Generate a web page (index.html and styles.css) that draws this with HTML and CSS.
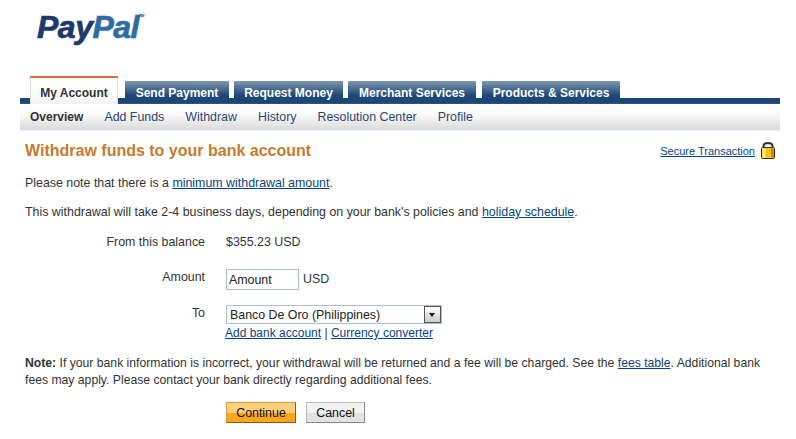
FILE: index.html
```html
<!DOCTYPE html>
<html lang="en">
<head>
    <meta charset="UTF-8">
    <title>Withdraw funds to your bank account - PayPal</title>
    <link rel="stylesheet" href="styles.css">
</head>
<body>

<div class="page">
    <!-- Logo -->
    <div class="logo"><span class="logo-pay">Pay</span><span class="logo-pal">Pal</span><span class="logo-tm">TM</span></div>

    <!-- Main tabs -->
    <div class="tabs">
        <a class="tab active">My Account</a>
        <a class="tab">Send Payment</a>
        <a class="tab">Request Money</a>
        <a class="tab">Merchant Services</a>
        <a class="tab">Products &amp; Services</a>
    </div>

    <!-- Sub navigation -->
    <div class="subnav">
        <a class="current">Overview</a>
        <a>Add Funds</a>
        <a>Withdraw</a>
        <a>History</a>
        <a>Resolution Center</a>
        <a>Profile</a>
    </div>

    <div class="content">
        <div class="title-row">
            <h1>Withdraw funds to your bank account</h1>
            <div class="secure">
                <a class="link">Secure Transaction</a>
                <svg class="lock" width="16" height="17" viewBox="0 0 16 17">
                    <path d="M3.500 7V4C3.500 2 5.200 1 8 1s4.500 1 4.500 3V7" fill="none" stroke="#333" stroke-width="2"/>
                    <path d="M5.200 6V4.200C5.200 3 6.400 2.500 8 2.500s2.800.5 2.800 1.700V6" fill="none" stroke="#c4c4c4" stroke-width=".8"/>
                    <rect x="1.500" y="5.500" width="13" height="11" rx="1" fill="#f4c21c" stroke="#3d3110"/>
                    <rect x="2.500" y="6.500" width="3" height="9" fill="#fdec94"/>
                    <rect x="11" y="6.500" width="3" height="9" fill="#c48c0c"/>
                </svg>
            </div>
        </div>

        <p class="note-line">Please note that there is a <a class="link">minimum withdrawal amount</a>.</p>
        <p class="note-line second">This withdrawal will take 2-4 business days, depending on your bank's policies and <a class="link">holiday schedule</a>.</p>

        <div class="form">
            <div class="row balance">
                <div class="label">From this balance</div>
                <div class="value">$355.23 USD</div>
            </div>
            <div class="row amount">
                <div class="label">Amount</div>
                <div class="value inline">
                    <input class="text-input" type="text" value="Amount">
                    <span>USD</span>
                </div>
            </div>
            <div class="row to">
                <div class="label">To</div>
                <div class="value">
                    <div class="select">
                        <span class="select-text">Banco De Oro (Philippines)</span>
                        <span class="select-arrow"></span>
                    </div>
                    <div class="select-links"><a class="link">Add bank account</a> | <a class="link">Currency converter</a></div>
                </div>
            </div>
        </div>

        <div class="bank-note">
            <div><b>Note:</b> If your bank information is incorrect, your withdrawal will be returned and a fee will be charged. See the <a class="link">fees table</a>. Additional bank</div>
            <div>fees may apply. Please contact your bank directly regarding additional fees.</div>
        </div>

        <div class="buttons">
            <button class="btn btn-primary" type="button">Continue</button>
            <button class="btn btn-cancel" type="button">Cancel</button>
        </div>
    </div>
</div>

</body>
</html>
```

FILE: styles.css
```css
/* Global */
body {
    margin: 0;
    background: #fff;
    color: #333;
    font-family: "Liberation Sans", Arial, sans-serif;
    font-size: 12.4px;
}

.page {
    width: 760px;
    height: 439px;
    margin-left: 20px;
    overflow: hidden;
}

.link {
    color: #084482;
    text-decoration: underline;
}

/* Logo */
.logo {
    height: 76px;
    padding-left: 17px;
    box-sizing: border-box;
    padding-top: 9px;
    font-size: 32px;
    line-height: 36px;
    font-weight: bold;
    font-style: italic;
    letter-spacing: -0.5px;
    -webkit-text-stroke: 0.7px;
}

.logo-pay {
    color: #1b3a6b;
}

.logo-pal {
    color: #2f6ca3;
}

.logo-tm {
    margin-left: 0;
    font-size: 4px;
    vertical-align: 21px;
    line-height: 0;
    color: #1b3a6b;
    -webkit-text-stroke: 0;
}

/* Tabs */
.tabs {
    display: flex;
    align-items: flex-end;
    height: 28px;
    padding-left: 10px;
    background: linear-gradient(to bottom, #fff 22px, #1d4776 22px);
}

.tab {
    margin-right: 5px;
    height: 17px;
    margin-bottom: 6px;
    line-height: 24px;
    font-size: 12px;
    text-align: center;
    white-space: nowrap;
    color: #fff;
    font-weight: bold;
    background: linear-gradient(to bottom, #8098ae, #1d4776 85%);
}

.tab:nth-child(2) {
    width: 104px;
}

.tab:nth-child(3) {
    width: 109px;
}

.tab:nth-child(4) {
    width: 128px;
    margin-right: 6px;
}

.tab:nth-child(5) {
    width: 138px;
}

.tab.active {
    width: 88px;
    height: 26px;
    margin-right: 7px;
    margin-bottom: 0;
    line-height: 30px;
    color: #333;
    background: linear-gradient(to bottom, #fff 60%, #f1f1f1);
    border-top: 2px solid #e2693a;
    box-shadow: inset 1px 0 #ddd, inset -1px 0 #ddd;
}

/* Sub navigation */
.subnav {
    display: flex;
    gap: 21px;
    height: 25px;
    padding-left: 10px;
    line-height: 26px;
    color: #2a4578;
    background: linear-gradient(to bottom, #fff, #fbfbfb 40%, #dcdcdc);
    border-bottom: 1px solid #cddbea;
    box-shadow: 0 1px 2px #eef3f8;
}

.subnav .current {
    color: #333;
    font-weight: bold;
    font-size: 12px;
}

/* Content */
.content {
    padding: 0 5px;
}

.title-row {
    display: flex;
    justify-content: space-between;
    align-items: center;
    height: 24px;
    margin-top: 9px;
}

h1 {
    margin: 0;
    color: #c87a2f;
    font-size: 16px;
    font-weight: bold;
}

.secure {
    display: flex;
    align-items: center;
    gap: 5px;
    margin-right: -1px;
    padding-bottom: 1px;
    font-size: 11px;
}

.note-line {
    margin: 13px 0 0;
    line-height: 15px;
}

.note-line.second {
    margin-top: 14px;
}

/* Form */
.form {
    margin-top: 15px;
}

.row {
    display: grid;
    grid-template-columns: 180px 1fr;
    column-gap: 21px;
}

.label {
    text-align: right;
}

.balance {
    line-height: 15px;
}

.amount {
    margin-top: 19px;
    line-height: 15px;
}

.amount .label {
    padding-top: 1px;
}

.value.inline {
    display: flex;
    align-items: center;
    gap: 4px;
}

.text-input {
    width: 73px;
    height: 21px;
    padding: 0 2px;
    box-sizing: border-box;
    border: 1px solid #a5bfd9;
    color: #222;
    font-family: inherit;
    font-size: 12.4px;
}

.to {
    margin-top: 15px;
}

.to .label {
    line-height: 17px;
}

.select {
    display: flex;
    justify-content: space-between;
    align-items: center;
    width: 216px;
    height: 19px;
    box-sizing: border-box;
    padding-left: 3px;
    border: 1px solid #a5bfd9;
    color: #222;
}

.select-arrow {
    position: relative;
    width: 17px;
    height: 17px;
    box-sizing: border-box;
    border: 1px solid #555;
    background: linear-gradient(to bottom, #fff, #ccc);
}

.select-arrow::after {
    content: "";
    position: absolute;
    left: 4px;
    top: 6px;
    border: 3.500px solid transparent;
    border-top: 4px solid #111;
    border-bottom: 0;
}

.select-links {
    margin: 2px 0 0 -1px;
    line-height: 14px;
    font-size: 12px;
}

.bank-note {
    margin-top: 15px;
    line-height: 17px;
    font-size: 12.2px;
}

/* Buttons */
.buttons {
    display: flex;
    gap: 10px;
    margin-top: 13px;
    padding-left: 201px;
}

.btn {
    height: 21px;
    padding: 0;
    color: #111;
    font-family: inherit;
    font-size: 12.4px;
    cursor: pointer;
}

.btn-primary {
    width: 70px;
    border: 1px solid #d99a3c;
    border-right-color: #8a5a10;
    border-bottom-color: #8a5a10;
    background: linear-gradient(to bottom, #fecf7a 50%, #fba61c 50%);
}

.btn-cancel {
    width: 59px;
    border: 1px solid #bbb;
    border-right-color: #888;
    border-bottom-color: #888;
    background: linear-gradient(to bottom, #f3f3f3 50%, #e2e2e2 50%);
}
```
